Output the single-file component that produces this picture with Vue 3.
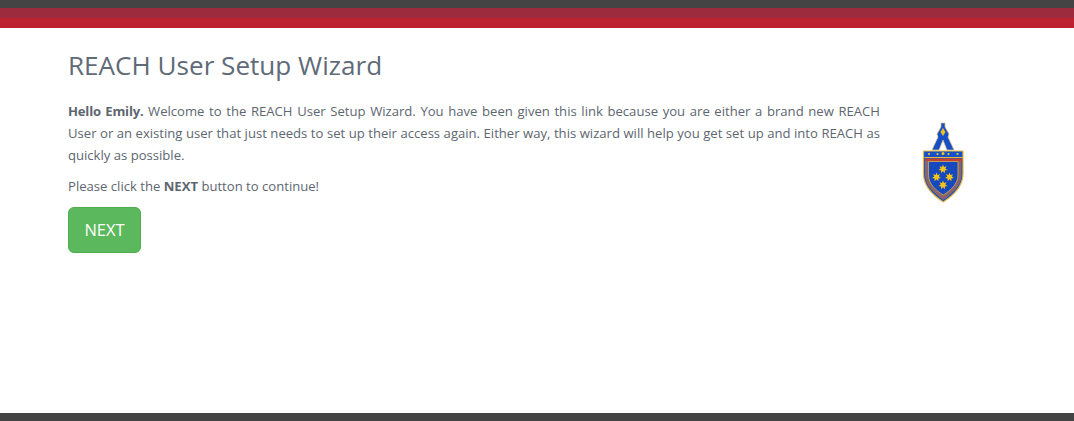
<script setup>
const stars = [[943, 169, 4.6], [936.500, 177, 4.6], [949.500, 177, 4.6], [943, 185, 4.6]]
function starPoints(cx, cy, r) {
  const pts = []
  for (let i = 0; i < 14; i++) {
    const rad = i % 2 === 0 ? r : r * 0.5
    const a = (Math.PI * i) / 7 - Math.PI / 2
    pts.push(`${(cx + rad * Math.cos(a)).toFixed(2)},${(cy + rad * Math.sin(a)).toFixed(2)}`)
  }
  return pts.join(' ')
}
</script>

<template>
  <div class="page">
    <div class="stripe stripe-dark"></div>
    <div class="stripe stripe-maroon"></div>
    <div class="stripe stripe-red"></div>
    <main class="content">
      <h1>REACH User Setup Wizard</h1>
      <div class="row">
        <div class="copy">
          <p class="intro"><strong>Hello Emily.</strong> Welcome to the REACH User Setup Wizard. You have been given this link because you are either a brand new REACH User or an existing user that just needs to set up their access again. Either way, this wizard will help you get set up and into REACH as quickly as possible.</p>
          <p class="cta">Please click the <strong>NEXT</strong> button to continue!</p>
          <button class="next" type="button">NEXT</button>
        </div>
        <svg class="crest" viewBox="918 118 50 88" width="50" height="88" aria-hidden="true">
          <path d="M941 123h4v4l4 7-1 3 6 13h-7l-4-10-4 10h-7l6-13-1-3 4-7z" fill="#1650c8" stroke="#dcc07a" stroke-width="0.7" />
          <path d="M943 128l2.500 4-2.500 4-2.500-4z" fill="#f0c020" />
          <path d="M923.500 151h39.500v23c0 13-10.500 22-19.750 28C934 196 923.500 187 923.500 174z" fill="#1650c8" stroke="#e8b93e" stroke-width="1.200" />
          <path d="M924.500 157.500h38" stroke="#e8b93e" stroke-width="1" />
          <path d="M925 158.500h37v3h-37z" fill="#c8402c" />
          <path d="M925 161h3.500v14c0 9 7.500 15.500 14.750 20 7.250-4.500 14.750-11 14.750-20v-14h3.500v14c0 11-10 19-18.250 25-8.250-6-18.250-14-18.250-25z" fill="#8a6468" />
          <path d="M928.500 161.500h29.500v13.500c0 9-7.500 15.500-14.750 20-7.250-4.500-14.750-11-14.750-20z" fill="#1648be" stroke="#d8b050" stroke-width="0.8" />
          <g fill="#f4c418">
            <circle cx="929" cy="154" r="1.100" />
            <circle cx="937.500" cy="154" r="1.100" />
            <circle cx="943" cy="153.500" r="1.500" />
            <circle cx="948.500" cy="154" r="1.100" />
            <circle cx="957.500" cy="154" r="1.100" />
            <polygon v-for="(s, i) in stars" :key="i" :points="starPoints(s[0], s[1], s[2])" />
          </g>
        </svg>
      </div>
    </main>
    <div class="footer-bar"></div>
  </div>
</template>

<style scoped>
.page {
  height: 421px;
  display: flex;
  flex-direction: column;
  background: #fff;
  overflow: hidden;
  font-family: "Open Sans", "Noto Sans", sans-serif;
  color: #5d6670;
}
.stripe { flex: none; }
.stripe-dark { height: 8px; background: #444; }
.stripe-maroon { height: 10px; background: #9c2b3d; }
.stripe-red { height: 10px; background: #bd212f; }
.content {
  flex: 1;
  padding: 0 68px;
}
h1 {
  margin: 21px 0 0;
  font-size: 26.100px;
  line-height: 33px;
  font-weight: 400;
  color: #5f6b78;
}
.row {
  display: flex;
  margin-top: 18px;
}
.copy { width: 812px; flex: none; }
p {
  margin: 0;
  font-size: 13.100px;
  line-height: 22px;
}
.intro { text-align: justify; }
.intro strong { letter-spacing: -0.2px; }
.cta { margin-top: 9px; }
.next {
  display: block;
  margin-top: 10px;
  width: 73px;
  height: 46px;
  padding: 0 0 2px;
  border: 1px solid #4cae4c;
  border-radius: 6px;
  background: #5cb85c;
  color: #fff;
  font-family: inherit;
  font-size: 16.500px;
}
.crest {
  flex: none;
  margin: 18px 0 0 38px;
}
.footer-bar { flex: none; height: 8px; background: #444; }
</style>
<style>
body { margin: 0; }
</style>
